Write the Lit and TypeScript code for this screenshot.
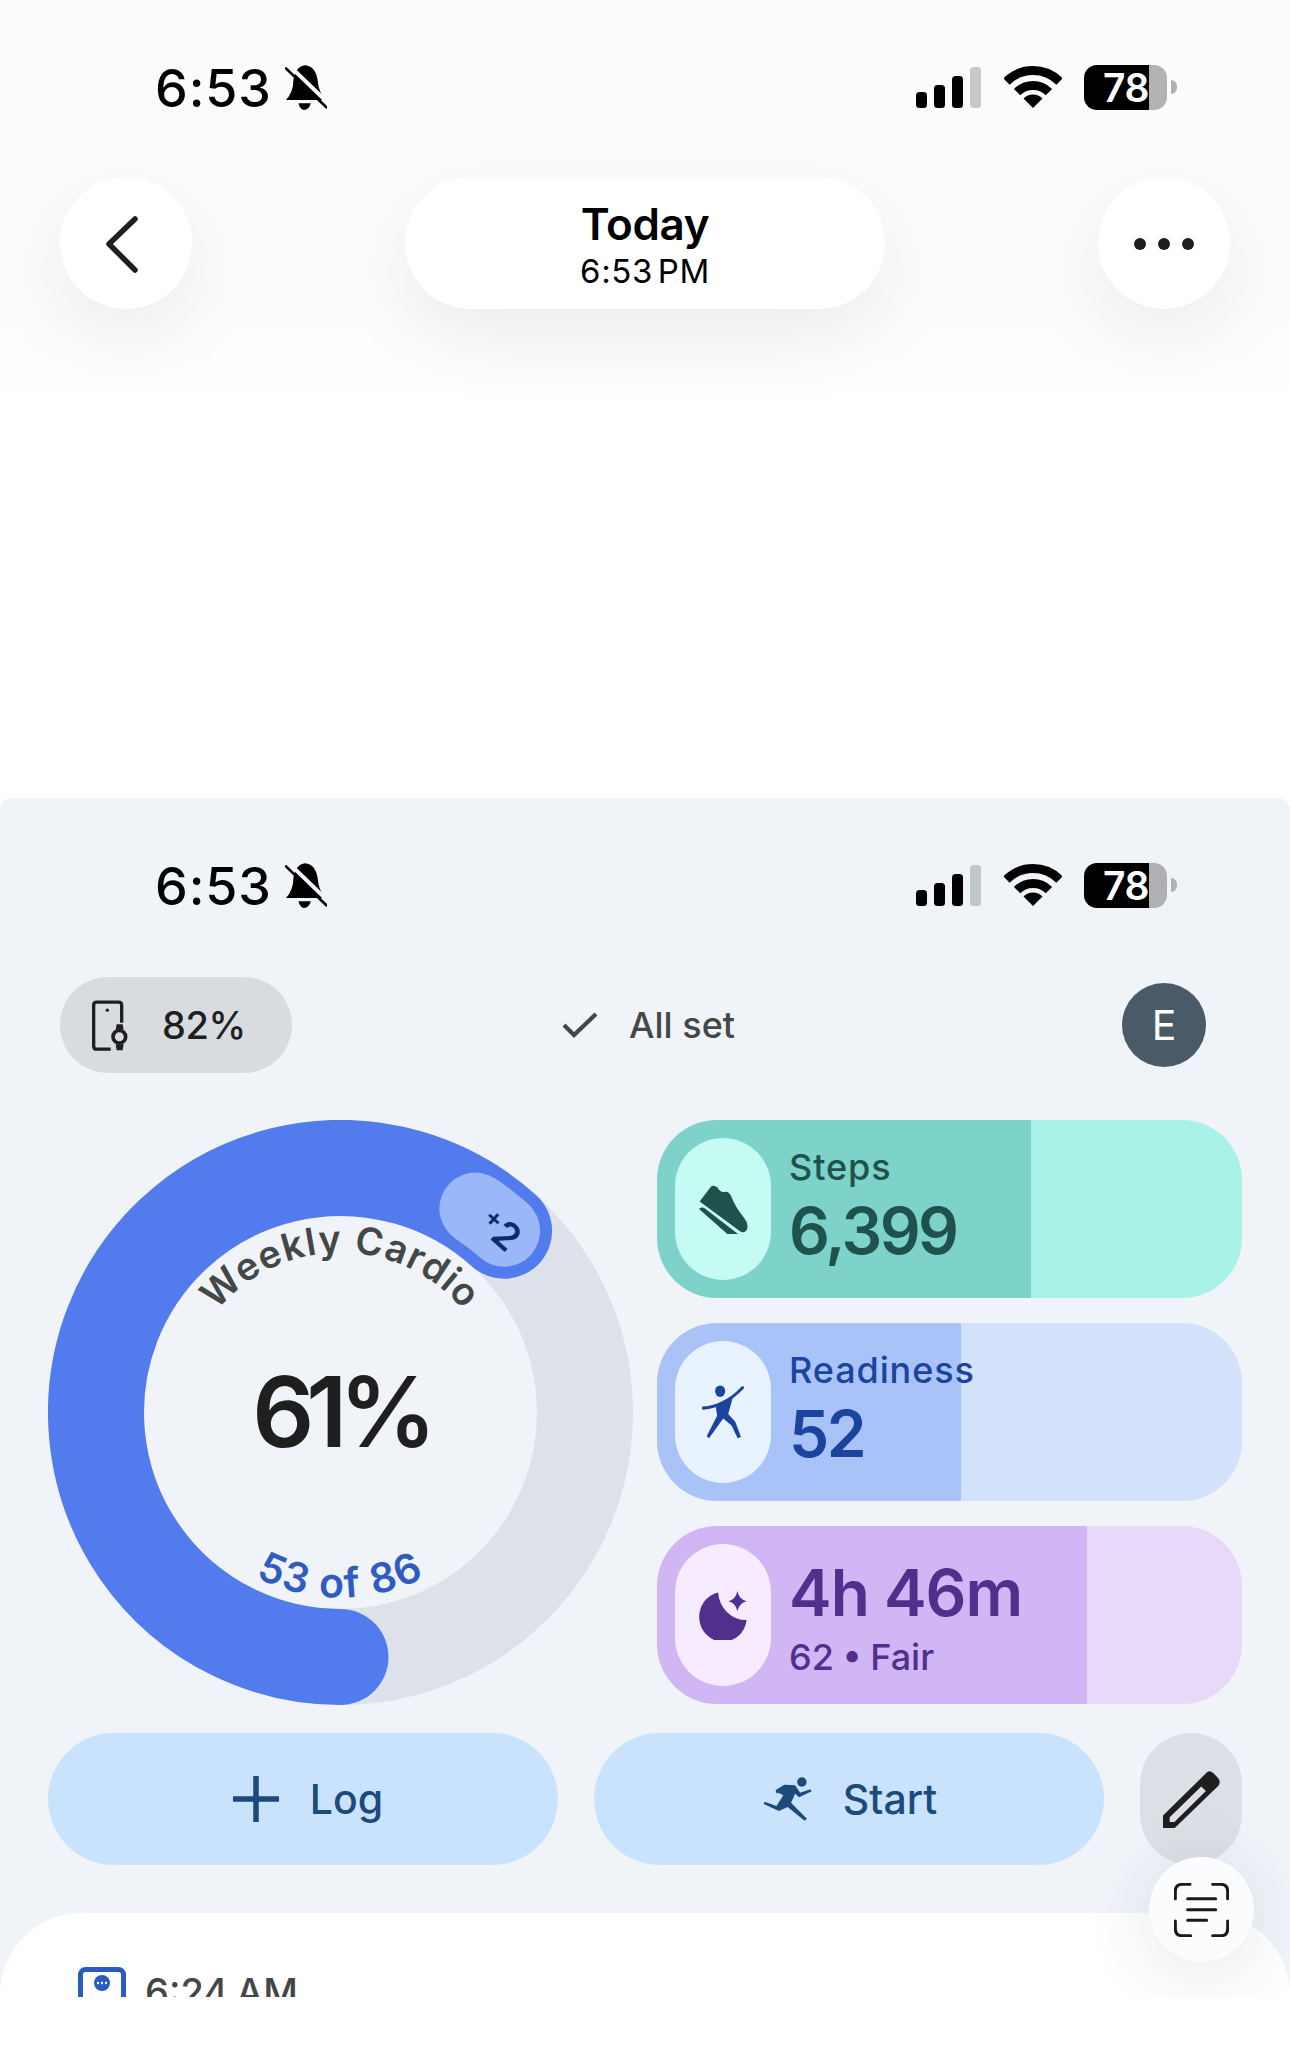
import { LitElement, html, css } from "lit";
import { customElement } from "lit/decorators.js";

const statusBar = () => html`
  <div class="status">
    <span class="clock">6:53</span>
    <svg class="bell" viewBox="465 45 125 135" preserveAspectRatio="none">
      <path d="M525 46Q555 48 562 90Q565 125 584 150L468 150Q490 125 490 90Q497 48 525 46Z" fill="#000" />
      <path d="M505 160H542Q536 180 522 180Q510 180 505 160Z" fill="#000" />
      <path d="M478 47L596 162" stroke="var(--gap)" stroke-width="12" fill="none" />
      <path d="M468 55L588 172" stroke="#000" stroke-width="8" stroke-linecap="round" fill="none" />
    </svg>
    <span class="status-gap"></span>
    <svg class="signal" viewBox="0 0 65 41">
      <rect x="0" y="25" width="11" height="16" rx="3.5" fill="#000" />
      <rect x="18" y="18" width="11" height="23" rx="3.5" fill="#000" />
      <rect x="36" y="9" width="11" height="32" rx="3.5" fill="#000" />
      <rect x="54" y="0" width="11" height="41" rx="3.5" fill="var(--dim)" />
    </svg>
    <svg class="wifi" viewBox="0 0 58 42">
      <path d="M2.5 15.5A37.5 37.5 0 0 1 55.5 15.5" stroke="#000" stroke-width="9" fill="none" />
      <path d="M13.1 26.1A22.5 22.5 0 0 1 44.9 26.1" stroke="#000" stroke-width="9" fill="none" />
      <path d="M29 42L19.5 32.5A13.5 13.5 0 0 1 38.5 32.5Z" fill="#000" />
    </svg>
    <span class="battery"><span class="battery-level">78</span><span class="battery-rest"></span></span>
    <span class="battery-tip"></span>
  </div>
`;

@customElement("app-root")
export class AppRoot extends LitElement {
  static styles = css`
    :host {
      display: block;
      width: 1290px;
      height: 2050px;
      background: #fff;
      font-family: Inter, "Liberation Sans", sans-serif;
      color: #1f1f1f;
      --gap: #fcfcfc;
      --dim: #c8c8c8;
    }
    * { box-sizing: border-box; }
    svg { display: block; flex: none; }

    .top {
      height: 798px;
      padding-top: 0.1px;
      background: linear-gradient(#fbfbfb 0, #fcfcfc 300px, #fff 410px);
    }
    .status {
      display: flex;
      align-items: center;
      height: 46px;
      margin-top: 64px;
      padding: 0 113px 0 155px;
    }
    .clock {
      font-size: 52px;
      line-height: 46px;
      font-weight: 500;
      letter-spacing: 0.9px;
      color: #000;
      position: relative;
      top: 2px;
    }
    .bell { width: 42px; height: 45px; margin-left: 13px; }
    .status-gap { flex: 1; }
    .signal { width: 65px; height: 41px; }
    .wifi { width: 58px; height: 42px; margin-left: 23px; }
    .battery {
      display: flex;
      width: 83px;
      height: 45px;
      margin-left: 22px;
      border-radius: 13px;
      overflow: hidden;
    }
    .battery-level {
      width: 65px;
      background: #000;
      color: #fff;
      font-size: 39px;
      line-height: 45px;
      font-weight: 600;
      text-align: right;
      letter-spacing: -0.5px;
    }
    .battery-rest { flex: 1; background: #b2b2b2; }
    .panel .battery-rest { background: #aeb0b5; }
    .battery-tip {
      width: 6px;
      height: 14px;
      margin-left: 4px;
      border-radius: 0 7px 7px 0;
      background: #b2b2b2;
    }

    .nav {
      display: flex;
      justify-content: space-between;
      align-items: stretch;
      height: 132px;
      margin-top: 67px;
      padding: 0 60px;
    }
    .nav-btn, .nav-title {
      background: #fff;
      border-radius: 66px;
      box-shadow: 0 30px 80px rgba(0, 0, 0, 0.065);
      display: flex;
      align-items: center;
      justify-content: center;
    }
    .nav-btn { width: 132px; }
    .nav-title {
      width: 480px;
      flex-direction: column;
      padding-top: 5px;
      color: #000;
    }
    .title-main { font-size: 44px; line-height: 50px; font-weight: 600; letter-spacing: -0.4px; }
    .title-sub { font-size: 33px; line-height: 44px; font-weight: 400; letter-spacing: 0.6px; word-spacing: -5px; }

    .panel {
      position: relative;
      height: 1199px;
      overflow: hidden;
      background: #f0f4f9;
      border-radius: 12px 12px 0 0;
      padding-top: 0.1px;
      --gap: #f0f4f9;
      --dim: #c2c6cb;
    }
    .toolbar {
      display: flex;
      align-items: center;
      height: 96px;
      margin-top: 69px;
      padding: 0 84px 0 60px;
    }
    .watch-pill {
      display: flex;
      align-items: center;
      width: 232px;
      height: 96px;
      padding-left: 32px;
      gap: 32px;
      border-radius: 48px;
      background: #d8dce1;
      font-size: 38px;
      font-weight: 500;
      letter-spacing: -0.4px;
    }
    .synced {
      display: flex;
      align-items: center;
      gap: 31px;
      margin-left: 270px;
      font-size: 36px;
      font-weight: 500;
      color: #444746;
    }
    .avatar {
      width: 84px;
      height: 84px;
      margin-left: auto;
      border-radius: 50%;
      background: #4a5a66;
      color: #fff;
      font-size: 41px;
      display: flex;
      align-items: center;
      justify-content: center;
    }

    .stats {
      display: grid;
      grid-template-columns: 585px 585px;
      gap: 24px;
      margin-top: 47px;
      padding: 0 48px;
    }
    .ring { width: 585px; height: 585px; }
    .ring-label { font-size: 38px; font-weight: 600; fill: #444746; letter-spacing: 1.2px; }
    .ring-count { font-size: 41px; font-weight: 600; fill: #2f5cc0; letter-spacing: 1.4px; }
    .ring-value { font-size: 97px; font-weight: 600; fill: #1f1f1f; letter-spacing: -8px; }
    .ring-bonus { font-weight: 600; fill: #0e2a6c; }

    .cards { display: flex; flex-direction: column; gap: 25px; }
    .card {
      display: flex;
      align-items: center;
      gap: 18px;
      height: 178px;
      padding-left: 18px;
      border-radius: 60px;
      background: linear-gradient(to right, var(--fill) var(--pct), var(--track) var(--pct));
      color: var(--ink);
    }
    .steps { --fill: #7dd2ca; --track: #a9f2e8; --ink: #1f524d; --chip: #c5fbf3; }
    .ready { --fill: #a9c3f9; --track: #d3e2fb; --ink: #1b449e; --chip: #e9f2ff; }
    .sleep { --fill: #d0b6f5; --track: #e9d9f9; --ink: #50308c; --chip: #f7ebff; }
    .chip {
      display: flex;
      align-items: center;
      justify-content: center;
      width: 96px;
      height: 142px;
      border-radius: 48px;
      background: var(--chip);
    }
    .card-text { display: flex; flex-direction: column; gap: 6px; padding-bottom: 6px; }
    .sleep .card-text { padding: 6px 0 0; }
    .small { font-size: 36px; line-height: 44px; font-weight: 500; letter-spacing: 0.9px; }
    .sleep .small { letter-spacing: 0; word-spacing: -1px; }
    .big { font-size: 64px; line-height: 72px; font-weight: 600; letter-spacing: -2.6px; }
    .sleep .big { letter-spacing: -1px; }

    .actions {
      display: flex;
      gap: 36px;
      height: 132px;
      margin-top: 28px;
      padding: 0 48px;
    }
    .action {
      display: flex;
      align-items: center;
      justify-content: center;
      width: 510px;
      border-radius: 66px;
      background: #c8e3fb;
      color: #1d4a7a;
      font-size: 41px;
      font-weight: 500;
    }
    .log { gap: 31px; padding-left: 10px; }
    .start { gap: 31px; padding-left: 2px; }
    .edit {
      display: flex;
      align-items: center;
      justify-content: center;
      width: 102px;
      border-radius: 51px;
      background: #dce0e6;
    }

    .sheet {
      height: 300px;
      margin-top: 48px;
      padding: 54px 0 0 78px;
      display: flex;
      align-items: flex-start;
      gap: 19px;
      border-radius: 82px 82px 0 0;
      background: #fff;
      font-size: 38px;
      line-height: 46px;
      font-weight: 500;
      word-spacing: -2px;
      color: #444746;
    }
    .sheet span { margin-top: 2px; }
    .fab {
      position: absolute;
      top: 1059px;
      right: 36px;
      width: 105px;
      height: 105px;
      display: flex;
      align-items: center;
      justify-content: center;
      border-radius: 50%;
      background: #fbfcfe;
      box-shadow: 0 10px 70px rgba(40, 50, 70, 0.12);
    }
  `;

  render() {
    return html`
      <section class="top">
        ${statusBar()}
        <div class="nav">
          <div class="nav-btn">
            <svg width="132" height="132" viewBox="0 0 132 132" fill="none">
              <path d="M75 42L49 67L75 93" stroke="#1f1f1f" stroke-width="5.5" stroke-linecap="round" stroke-linejoin="round" />
            </svg>
          </div>
          <div class="nav-title">
            <span class="title-main">Today</span>
            <span class="title-sub">6:53 PM</span>
          </div>
          <div class="nav-btn">
            <svg width="132" height="132" viewBox="0 0 132 132" fill="#1f1f1f">
              <circle cx="42" cy="67" r="6" /><circle cx="66" cy="67" r="6" /><circle cx="90" cy="67" r="6" />
            </svg>
          </div>
        </div>
      </section>

      <section class="panel">
        ${statusBar()}
        <div class="toolbar">
          <div class="watch-pill">
            <svg width="38" height="51" viewBox="36 30 114 152" fill="#1f1f1f">
              <path d="M125 98V45Q125 36 116 36H50Q41 36 41 45V168Q41 177 50 177H92" fill="none" stroke="#1f1f1f" stroke-width="10" />
              <circle cx="82" cy="60" r="5" />
              <circle cx="118" cy="140" r="19" fill="none" stroke="#1f1f1f" stroke-width="11" />
              <path d="M107 118L110 102H128L131 118ZM107 162L110 180H128L131 162Z" />
            </svg>
            <span>82%</span>
          </div>
          <div class="synced">
            <svg width="36" height="26" viewBox="0 0 36 26" fill="none">
              <path d="M2 13L12 23L34 2" stroke="#444746" stroke-width="4.2" />
            </svg>
            <span>All set</span>
          </div>
          <div class="avatar">E</div>
        </div>

        <div class="stats">
          <svg class="ring" viewBox="0 0 585 585">
            <defs>
              <path id="ring-top" d="M154 212.5A160 160 0 0 1 431 212.5" fill="none" />
              <path id="ring-bottom" d="M107.5 292.5A185 185 0 0 0 477.5 292.5" fill="none" />
            </defs>
            <circle cx="292.5" cy="292.5" r="244.5" fill="none" stroke="#dde2ea" stroke-width="96" />
            <path d="M292.5 537A244.5 244.5 0 1 1 456.1 110.8" fill="none" stroke="#527cee" stroke-width="96" stroke-linecap="round" />
            <path d="M427.4 88.6A244.5 244.5 0 0 1 456.1 110.8" fill="none" stroke="#9ab7fa" stroke-width="72" stroke-linecap="round" />
            <text class="ring-bonus" transform="translate(451 111) rotate(42)" text-anchor="middle">
              <tspan font-size="26" dy="2">+</tspan><tspan font-size="38" dy="10">2</tspan>
            </text>
            <text class="ring-label" text-anchor="middle">
              <textPath href="#ring-top" startOffset="50%">Weekly Cardio</textPath>
            </text>
            <text class="ring-value" x="292.5" y="327" text-anchor="middle">61%</text>
            <text class="ring-count" text-anchor="middle">
              <textPath href="#ring-bottom" startOffset="50%">53 of 86</textPath>
            </text>
          </svg>

          <div class="cards">
            <div class="card steps" style="--pct:64%">
              <div class="chip">
                <svg width="49" height="49" viewBox="115 170 147 127" preserveAspectRatio="none" fill="#1f524d">
                  <path d="M117 213L150 175Q158 168 170 176Q178 190 192 188Q205 186 212 200Q222 225 250 255Q266 272 258 287Q250 296 238 290Z" />
                  <path d="M115 232Q120 226 130 229L232 297L200 297Z" />
                </svg>
              </div>
              <div class="card-text">
                <span class="small">Steps</span>
                <span class="big">6,399</span>
              </div>
            </div>
            <div class="card ready" style="--pct:52%">
              <div class="chip">
                <svg width="42" height="54" viewBox="127 695 125 140" preserveAspectRatio="none" fill="#1b449e">
                  <circle cx="181" cy="711" r="15" />
                  <path d="M130 755Q165 752 185 742Q215 732 248 702" fill="none" stroke="#1b449e" stroke-width="8" stroke-linecap="round" />
                  <path d="M168 750L218 730L205 770L226 790L243 830L233 833L215 800L190 782L148 833L141 828L172 775Z" />
                </svg>
              </div>
              <div class="card-text">
                <span class="small">Readiness</span>
                <span class="big">52</span>
              </div>
            </div>
            <div class="card sleep" style="--pct:73.5%">
              <div class="chip">
                <svg width="48" height="49" viewBox="117 1228 145 130" preserveAspectRatio="none" fill="#50308c">
                  <path d="M175 1232A72 66 0 1 0 261 1305A84 77 0 0 1 175 1232Z" />
                  <path d="M233 1228Q238 1250 261 1255Q238 1260 233 1282Q228 1260 206 1255Q228 1250 233 1228Z" />
                </svg>
              </div>
              <div class="card-text">
                <span class="big">4h 46m</span>
                <span class="small">62 • Fair</span>
              </div>
            </div>
          </div>
        </div>

        <div class="actions">
          <div class="action log">
            <svg width="46" height="46" viewBox="0 0 46 46">
              <path d="M23 0V46M0 23H46" stroke="#1d4a7a" stroke-width="5.5" fill="none" />
            </svg>
            <span>Log</span>
          </div>
          <div class="action start">
            <svg width="49" height="44" viewBox="45 35 145 132" preserveAspectRatio="none" fill="#1d4a7a">
              <circle cx="160" cy="50" r="14" />
              <path d="M82 75L108 58L140 60L155 82L185 72L189 78L152 96L140 85L128 112L175 160L168 166L118 125L92 137L47 116L50 109L85 122L105 90L90 82L86 85Z" />
            </svg>
            <span>Start</span>
          </div>
          <div class="edit">
            <svg width="57" height="57" viewBox="130 152 170 170" fill="#1f1f1f">
              <path fill-rule="evenodd" d="M130 322V285L262 155Q270 150 280 158L296 175Q302 185 296 195L165 322ZM150 290V304H164L258 212L244 198Z" />
            </svg>
          </div>
        </div>

        <div class="sheet">
          <svg width="48" height="70" viewBox="0 0 48 70" fill="none">
            <rect x="2.5" y="2.5" width="43" height="65" rx="5" stroke="#2a5bc0" stroke-width="5" />
            <circle cx="24" cy="16" r="8" fill="#2a5bc0" />
            <circle cx="20" cy="16" r="1.2" fill="#fff" /><circle cx="24" cy="16" r="1.2" fill="#fff" /><circle cx="28" cy="16" r="1.2" fill="#fff" />
          </svg>
          <span>6:24 AM</span>
        </div>

        <div class="fab">
          <svg width="55" height="54" viewBox="162 488 165 162" fill="none" stroke="#1a1a1a" stroke-width="9" stroke-linecap="round">
            <path d="M210 492H187Q166 492 166 513V535" />
            <path d="M278 492H302Q323 492 323 513V535" />
            <path d="M166 602V625Q166 646 187 646H212" />
            <path d="M323 602V625Q323 646 302 646H278" />
            <path d="M203 535H287M203 568H287M203 600H260" />
          </svg>
        </div>
      </section>
    `;
  }
}
